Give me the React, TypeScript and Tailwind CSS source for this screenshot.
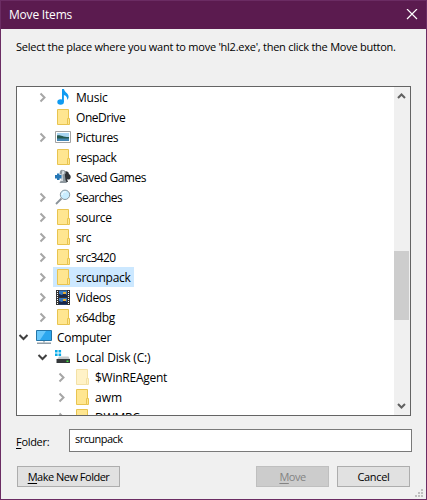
import React from "react";

type IconName = "music" | "folder" | "faded" | "pictures" | "games" | "search" | "videos" | "computer" | "disk";
type Row = { label: string; icon: IconName; level: number; state?: "open" | "closed"; selected?: boolean; tracking: string };

const rows: Row[] = [
  { label: "Music", icon: "music", level: 1, state: "closed", tracking: "tracking-[-0.2px]" },
  { label: "OneDrive", icon: "folder", level: 1, tracking: "tracking-[-0.45px]" },
  { label: "Pictures", icon: "pictures", level: 1, state: "closed", tracking: "tracking-[-0.35px]" },
  { label: "respack", icon: "folder", level: 1, tracking: "tracking-[-0.45px]" },
  { label: "Saved Games", icon: "games", level: 1, tracking: "tracking-[-0.5px]" },
  { label: "Searches", icon: "search", level: 1, state: "closed", tracking: "tracking-[-0.55px]" },
  { label: "source", icon: "folder", level: 1, state: "closed", tracking: "tracking-[-0.35px]" },
  { label: "src", icon: "folder", level: 1, state: "closed", tracking: "tracking-[-0.4px]" },
  { label: "src3420", icon: "folder", level: 1, state: "closed", tracking: "tracking-[-0.6px]" },
  { label: "srcunpack", icon: "folder", level: 1, state: "closed", selected: true, tracking: "tracking-[-0.3px]" },
  { label: "Videos", icon: "videos", level: 1, state: "closed", tracking: "tracking-[-0.35px]" },
  { label: "x64dbg", icon: "folder", level: 1, state: "closed", tracking: "tracking-[-0.4px]" },
  { label: "Computer", icon: "computer", level: 0, state: "open", tracking: "tracking-[-0.3px]" },
  { label: "Local Disk (C:)", icon: "disk", level: 1, state: "open", tracking: "tracking-[-0.15px]" },
  { label: "$WinREAgent", icon: "faded", level: 2, state: "closed", tracking: "tracking-[-0.25px]" },
  { label: "awm", icon: "folder", level: 2, state: "closed", tracking: "tracking-[0px]" },
  { label: "DWMRC", icon: "folder", level: 2, state: "closed", tracking: "tracking-[-0.2px]" },
];

const indents = ["pl-0", "pl-[19px]", "pl-[38px]"];

function Icon({ name }: { name: IconName }) {
  return (
    <svg className="block h-4 w-4" viewBox="0 0 16 16">
      {(name === "folder" || name === "faded") && (
        <g opacity={name === "faded" ? 0.5 : 1}>
          <path d="M2.500 .5h11v15h-11z" fill="#ffe690" stroke="#e8c450" />
          <path d="M12.500 9.500h2v6h-2z" fill="#ffe690" stroke="#e8c450" />
        </g>
      )}
      {name === "music" && (
        <g>
          <path d="M7 0h2c.2 3.200 4.600 4.200 4.600 7.700 0 1.500-.8 2.500-1.600 3.200.6-2.600-.5-4-3.100-5V13H7z" fill="#0f9bf2" />
          <ellipse cx="5.600" cy="13" rx="3.300" ry="2.800" fill="#0f9bf2" />
        </g>
      )}
      {name === "pictures" && (
        <g>
          <path d="M.5 2.500h15v11H.5z" fill="#fff" stroke="#a2a2a2" />
          <path d="M2 4h12v8H2z" fill="#a9d5f2" />
          <path d="M2 6.500c3-1 5 1.500 12 1.500v2H2z" fill="#25594f" />
          <path d="M2 9.500h12V12H2z" fill="#4688b4" />
        </g>
      )}
      {name === "games" && (
        <g>
          <path d="M9 3a3 3 0 0 1 5 2.200c2 .5 2.500 4.500 0 5.300-.8.300-1.500 0-2-.5l1 3H8z" fill="#303438" />
          <path d="M8 1a2.500 2.500 0 0 1 1.800 4.500L10.500 11l1.500 3H4.500L6 11l.5-5.200A2.500 2.500 0 0 1 8 1z" fill="#8f999f" />
          <path d="M7.500 1.500a2 2 0 0 1 0 4L8 12H6l.5-6z" fill="#d8dfe3" />
          <path d="M0 6h2V4.500h2.500V6h2v3.500h-2V11H2V9.500H0z" fill="#2677b6" />
        </g>
      )}
      {name === "search" && (
        <g>
          <path d="M1 15l5.500-5.500" stroke="#899299" strokeWidth="1.800" />
          <circle cx="10" cy="5.800" r="4.700" fill="#c9edff" stroke="#8997a0" />
          <path d="M7 6a3 3 0 0 1 4-3" stroke="#fff" fill="none" />
        </g>
      )}
      {name === "videos" && (
        <g>
          <path d="M1 1h14v15H1z" fill="#333" />
          <path d="M4 1.500h8v6.500H4zM4 9h8v6.500H4z" fill="#397bc1" />
          <path d="M4 5l3 1 2-2 3 2v2H4zM4 12l3 1 2-2 3 2v2.500H4z" fill="#17264a" />
          <path d="M8 3h3v2H8zM8 10h3v2H8z" fill="#e3ad36" />
          <path d="M2.500 2v14M13.500 2v14" stroke="#fff" strokeDasharray="1 1" />
        </g>
      )}
      {name === "computer" && (
        <g>
          <path d="M.5 1.500h15v10H.5z" fill="#2ca7ee" stroke="#2375a8" />
          <path d="M1 2h9l-6 9H1z" fill="#68c8fb" />
          <path d="M7 12h2v1.500H7z" fill="#b6bfc4" />
          <path d="M1 13.500h14V15H1z" fill="#8f9da7" />
        </g>
      )}
      {name === "disk" && (
        <g>
          <path d="M0 1h2.600v2.500H0zM3.500 1h2.600v2.500H3.500zM0 4.500h2.600V7H0zM3.500 4.500h2.600V7H3.500z" fill="#09abe8" />
          <path d="M4 7.500h9.500l1.500 3H2z" fill="#c5c9cb" />
          <path d="M1.500 10h13.500v4H1.500z" fill="#34383a" />
          <path d="M11.500 11.500h2V13h-2z" fill="#42e342" />
        </g>
      )}
    </svg>
  );
}

function Chevron({ state }: { state?: "open" | "closed" }) {
  return (
    <svg className="block h-4 w-4" viewBox="0 0 16 16" fill="none" strokeWidth="2">
      {state === "closed" && <path d="M4.500 4.500l4 4-4 4" stroke="#a6a6a6" />}
      {state === "open" && <path d="M2.500 6l4 4 4-4" stroke="#404040" />}
    </svg>
  );
}

function TreeRow({ row }: { row: Row }) {
  return (
    <div className={`flex h-5 shrink-0 items-center ${indents[row.level]}`}>
      <div className="w-[17px]"><Chevron state={row.state} /></div>
      <div className={`flex h-5 items-center pr-1 pl-0.5 ${row.selected ? "bg-[#cce8ff]" : ""}`}>
        <Icon name={row.icon} />
        <span className={`pt-px pl-[5px] whitespace-nowrap ${row.tracking}`}>{row.label}</span>
      </div>
    </div>
  );
}

export default function App() {
  return (
    <div className="flex h-[500px] w-[427px] flex-col border border-[#6b2c63] bg-[#f0f0f0] font-['Open_Sans','Noto_Sans',sans-serif] text-[12px] leading-4 text-black">
      <header className="flex h-7 shrink-0 items-center justify-between bg-[#5b1b4f] pr-2 pl-2 text-white">
        <span className="tracking-[-0.2px]">Move Items</span>
        <svg className="h-3 w-3" viewBox="0 0 12 12" stroke="white" strokeWidth="1.200"><path d="M1 0l10 10M11 0L1 10" /></svg>
      </header>
      <p className="ml-[15px] h-[57px] shrink-0 pt-[10px] text-[11px] whitespace-nowrap tracking-[-0.25px]">Select the place where you want to move 'hl2.exe', then click the Move button.</p>
      <div className="ml-[15px] flex h-[330px] w-[395px] shrink-0 overflow-hidden border border-[#646464] bg-white">
        <div className="flex h-full grow flex-col overflow-hidden">
          {rows.map((row) => <TreeRow key={row.label} row={row} />)}
        </div>
        <div className="flex w-4 flex-col items-center bg-[#f0f0f0]">
          <svg className="h-[164px] w-4" viewBox="0 0 16 164" fill="none" stroke="#606060" strokeWidth="2"><path d="M4 11l3.500-3.500L11 11" /></svg>
          <div className="mr-px h-[69px] w-[15px] bg-[#cdcdcd]" />
          <svg className="h-[95px] w-4" viewBox="0 0 16 95" fill="none" stroke="#606060" strokeWidth="2"><path d="M4 84l3.500 3.500L11 84" /></svg>
        </div>
      </div>
      <div className="mt-[13px] ml-[15px] flex h-[23px] shrink-0 items-center text-[11px]">
        <label className="w-[53px] pt-[3px] tracking-[-0.3px]"><span className="underline underline-offset-2">F</span>older:</label>
        <div className="h-[23px] w-[343px] border border-[#7a7a7a] bg-white pt-px pl-[5px] tracking-[-0.55px]">srcunpack</div>
      </div>
      <div className="mt-[14px] ml-4 flex h-[21px] shrink-0 text-[11px] tracking-[-0.5px]">
        <button className="w-[103px] border border-[#adadad] bg-[#e1e1e1] pt-px"><span className="underline underline-offset-2">M</span>ake New Folder</button>
        <button className="ml-[136px] w-[73px] border border-[#bfbfbf] bg-[#cccccc] pt-px text-[#838383]"><span className="underline underline-offset-2">M</span>ove</button>
        <button className="ml-2 w-[73px] border border-[#adadad] bg-[#e1e1e1] pt-px tracking-[-0.35px]">Cancel</button>
      </div>
      <svg className="mt-0.5 mr-0.5 ml-auto h-[9px] w-[9px] shrink-0" viewBox="0 0 9 9" fill="#bfbfbf"><path d="M6 0h2v2H6zM3 3h2v2H3zM6 3h2v2H6zM0 6h2v2H0zM3 6h2v2H3zM6 6h2v2H6z" /></svg>
    </div>
  );
}
